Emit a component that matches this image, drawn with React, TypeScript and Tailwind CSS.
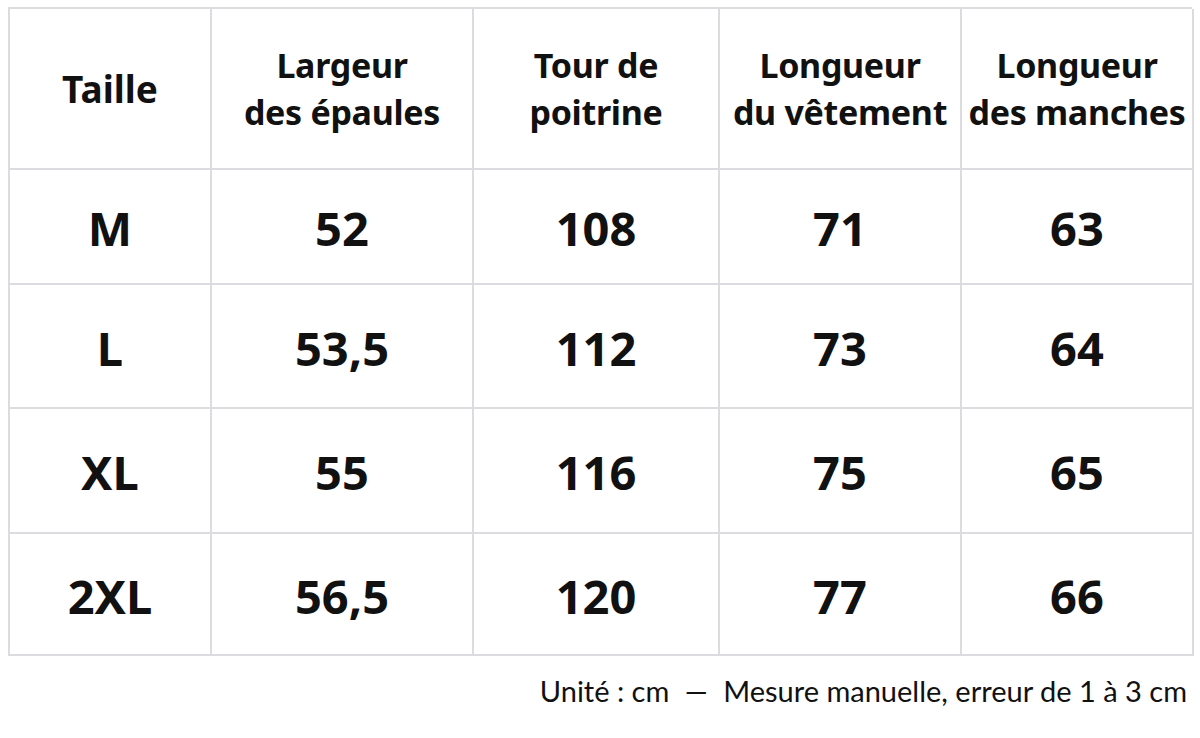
import React from 'react';

const headers = [
  ['Taille'],
  ['Largeur', 'des épaules'],
  ['Tour de', 'poitrine'],
  ['Longueur', 'du vêtement'],
  ['Longueur', 'des manches'],
];

const rows = [
  { h: 'h-[115px]', cells: ['M', '52', '108', '71', '63'] },
  { h: 'h-[124px]', cells: ['L', '53,5', '112', '73', '64'] },
  { h: 'h-[125px]', cells: ['XL', '55', '116', '75', '65'] },
  { h: 'h-[122px]', cells: ['2XL', '56,5', '120', '77', '66'] },
];

export default function App() {
  return (
    <div className="w-[1200px] h-[738px] bg-white overflow-hidden text-[#111]">
      <div
        className="ml-[8px] mt-[7px] w-[1184px] grid grid-cols-[202px_262px_246px_242px_232px] border-l-2 border-t-2 border-[#dcdce0]"
        style={{ fontFamily: '"Noto Sans", sans-serif' }}
      >
        {headers.map((lines, i) => (
          <div
            key={i}
            className={`h-[161px] flex flex-col items-center justify-center border-r-2 border-b-2 border-[#dcdce0] font-bold whitespace-nowrap ${
              lines.length === 1 ? 'text-[37px] leading-[46px]' : 'text-[34px] leading-[47px] tracking-[-0.3px]'
            }`}
          >
            {lines.map((l) => (
              <span key={l}>{l}</span>
            ))}
          </div>
        ))}
        {rows.map((row, r) =>
          row.cells.map((c, i) => (
            <div
              key={`${r}-${i}`}
              className={`${row.h} flex items-center justify-center border-r-2 border-b-2 border-[#dcdce0] text-[47px] font-bold leading-none pt-[4px]`}
            >
              {c}
            </div>
          ))
        )}
      </div>
      <div
        className="mt-[17px] pr-[13px] text-right text-[29px] text-[#111] leading-[36px]"
        style={{ fontFamily: 'Lato, sans-serif' }}
      >
        Unité : cm <span className="mx-[8px]">—</span> Mesure manuelle, erreur de 1 à 3 cm
      </div>
    </div>
  );
}
